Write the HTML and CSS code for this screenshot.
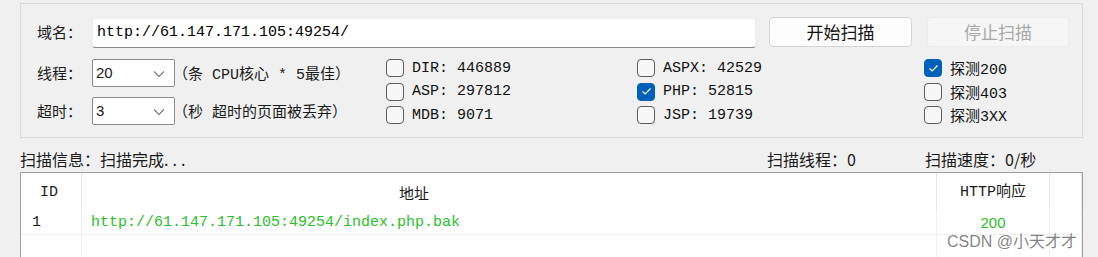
FILE: index.html
```html
<!DOCTYPE html>
<html lang="zh-CN">
<head>
    <meta charset="UTF-8">
    <title>目录扫描</title>
    <link rel="stylesheet" href="styles.css">
</head>
<body>
    <div class="group">
        <div class="url-row">
            <span class="label">域名：</span>
            <div class="url-input">http://61.147.171.105:49254/</div>
            <button class="btn">开始扫描</button>
            <button class="btn btn-disabled">停止扫描</button>
        </div>

        <div class="opt-row">
            <div class="settings">
                <div class="setting">
                    <span class="label">线程：</span>
                    <div class="select">20
                        <svg class="chev" width="12" height="8" viewBox="0 0 12 8"><path d="M1 1.5 L6 6.5 L11 1.5" fill="none" stroke="#777" stroke-width="1.1"/></svg>
                    </div>
                    <span class="note">（条 CPU核心 * 5最佳）</span>
                </div>
                <div class="setting">
                    <span class="label">超时：</span>
                    <div class="select">3
                        <svg class="chev" width="12" height="8" viewBox="0 0 12 8"><path d="M1 1.5 L6 6.5 L11 1.5" fill="none" stroke="#777" stroke-width="1.1"/></svg>
                    </div>
                    <span class="note">（秒 超时的页面被丢弃）</span>
                </div>
            </div>

            <div class="checks col1">
                <div class="check"><span class="box"></span>DIR: 446889</div>
                <div class="check"><span class="box"></span>ASP: 297812</div>
                <div class="check"><span class="box"></span>MDB: 9071</div>
            </div>
            <div class="checks col2">
                <div class="check"><span class="box"></span>ASPX: 42529</div>
                <div class="check"><span class="box checked"><svg width="11" height="9" viewBox="0 0 11 9"><path d="M1.5 4.5 L4.2 7 L9.5 1.5" fill="none" stroke="#fff" stroke-width="1.2"/></svg></span>PHP: 52815</div>
                <div class="check"><span class="box"></span>JSP: 19739</div>
            </div>
            <div class="checks col3">
                <div class="check"><span class="box checked"><svg width="11" height="9" viewBox="0 0 11 9"><path d="M1.5 4.5 L4.2 7 L9.5 1.5" fill="none" stroke="#fff" stroke-width="1.2"/></svg></span>探测200</div>
                <div class="check"><span class="box"></span>探测403</div>
                <div class="check"><span class="box"></span>探测3XX</div>
            </div>
        </div>
    </div>

    <div class="status">
        <span class="status-info">扫描信息：扫描完成<span class="dots">...</span></span>
        <span class="status-threads">扫描线程：0</span>
        <span>扫描速度：0/秒</span>
    </div>

    <div class="results">
        <div class="cell head c-id">ID</div>
        <div class="cell head c-url">地址</div>
        <div class="cell head c-code">HTTP响应</div>
        <div class="cell head"></div>

        <div class="cell row c-id">1</div>
        <div class="cell row c-url hit">http://61.147.171.105:49254/index.php.bak</div>
        <div class="cell row c-code hit-code">200</div>
        <div class="cell row"></div>

        <div class="cell empty"></div>
        <div class="cell empty"></div>
        <div class="cell empty"></div>
        <div class="cell empty"></div>
    </div>

    <div class="watermark">CSDN @小天才才</div>
</body>
</html>
```

FILE: styles.css
```css
body {
    margin: 0;
    width: 1098px;
    height: 257px;
    overflow: hidden;
    background-color: #f0f0f0;
    color: #1a1a1a;
    font-family: "Noto Sans CJK SC", sans-serif;
    position: relative;
}

.group {
    margin: 3px 15px 0 20px;
    height: 135px;
    border: 1px solid #dadada;
    box-sizing: border-box;
    padding: 13px 0 0 16px;
}

.url-row {
    display: flex;
    align-items: flex-start;
}

.label {
    width: 55px;
    font-size: 15px;
    line-height: 28px;
    flex-shrink: 0;
}

.url-row .label {
    line-height: 30px;
}

.url-input {
    width: 664px;
    height: 30px;
    margin-top: 1px;
    box-sizing: border-box;
    background-color: #ffffff;
    border: 1px solid #ececec;
    border-bottom: 1px solid #8a8a8a;
    border-radius: 3px;
    padding-left: 4px;
    font-family: "Liberation Mono", "Noto Sans CJK SC", monospace;
    font-size: 15px;
    line-height: 28px;
    color: #000000;
}

.btn {
    width: 143px;
    height: 30px;
    margin-left: 13px;
    background-color: #fdfdfd;
    border: 1px solid #d3d3d3;
    border-radius: 4px;
    font-family: "Noto Sans CJK SC", sans-serif;
    font-size: 17px;
    line-height: 26px;
    color: #111111;
    padding: 0;
}

.btn-disabled {
    width: 142px;
    margin-left: 15px;
    background-color: #f6f6f6;
    border-color: #ebebeb;
    color: #a8a8a8;
}

.opt-row {
    display: flex;
    margin-top: 11px;
}

.settings {
    width: 349px;
    display: flex;
    flex-direction: column;
    gap: 10px;
}

.setting {
    display: flex;
    align-items: center;
}

.select {
    width: 83px;
    height: 28px;
    box-sizing: border-box;
    background-color: #ffffff;
    border: 1px solid #8c8c8c;
    border-radius: 2px;
    padding-left: 3px;
    font-family: "Liberation Sans", sans-serif;
    font-size: 15px;
    line-height: 26px;
    position: relative;
    flex-shrink: 0;
}

.chev {
    position: absolute;
    right: 9px;
    top: 10px;
}

.note {
    margin-left: -2px;
    font-family: "Liberation Mono", "Noto Sans CJK SC", monospace;
    font-size: 15px;
    white-space: nowrap;
}

.checks {
    display: flex;
    flex-direction: column;
    gap: 5.5px;
}

.col1 { width: 251px; }
.col2 { width: 287px; }

.check {
    display: flex;
    align-items: center;
    height: 18px;
    font-family: "Liberation Mono", "Noto Sans CJK SC", monospace;
    font-size: 15px;
    color: #111111;
}

.box {
    width: 18px;
    height: 18px;
    box-sizing: border-box;
    border: 1px solid #5c5c5c;
    border-radius: 4px;
    margin-right: 8px;
    background-color: #f7f7f7;
    display: flex;
    align-items: center;
    justify-content: center;
}

.box.checked {
    background-color: #005fb8;
    border-color: #005fb8;
}

.status {
    display: flex;
    margin: 10px 0 0 20px;
    font-size: 16px;
    line-height: 22px;
}

.status-info { width: 747px; }
.status-threads { width: 158px; }

.dots {
    letter-spacing: 4px;
}

.results {
    margin: 2px 15px 0 20px;
    border: 1px solid #a0a0a0;
    border-bottom: none;
    background-color: #ffffff;
    display: grid;
    grid-template-columns: 61px 855px 113px 32px;
    grid-template-rows: 39px 23px 22px;
}

.cell {
    border-right: 1px solid #f0f0f0;
    box-sizing: border-box;
    white-space: nowrap;
}

.head {
    border-right-color: #e6e6e6;
    font-family: "Liberation Mono", "Noto Sans CJK SC", monospace;
    font-size: 15px;
    line-height: 39px;
}

.head.c-id { padding-left: 19px; }
.head.c-url { padding-left: 317px; font-family: "Noto Sans CJK SC", sans-serif; }
.head.c-code { text-align: center; }

.row {
    border-bottom: 1px solid #efefef;
    font-family: "Liberation Mono", monospace;
    font-size: 15px;
    line-height: 22px;
}

.row.c-id { padding-left: 11px; }
.row.c-url { padding-left: 9px; }

.hit { color: #2bc02b; }

.hit-code {
    color: #2bc02b;
    text-align: center;
    font-family: "Liberation Sans", sans-serif;
}

.watermark {
    position: absolute;
    left: 947px;
    top: 228px;
    font-family: "Liberation Sans", "Noto Sans CJK SC", sans-serif;
    font-size: 16px;
    color: rgba(110, 110, 110, 0.85);
}
```
